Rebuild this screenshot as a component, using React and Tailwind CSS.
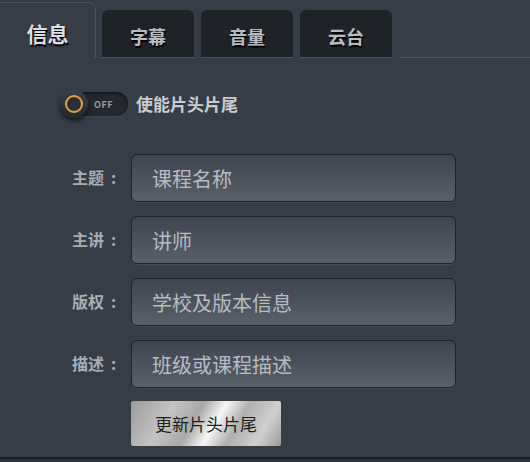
import React, { useState } from "react";

const font = { fontFamily: '"Noto Sans CJK SC", "Noto Sans", sans-serif' };

const tabs = ["信息", "字幕", "音量", "云台"];

const fields = [
  { label: "主题", placeholder: "课程名称" },
  { label: "主讲", placeholder: "讲师" },
  { label: "版权", placeholder: "学校及版本信息" },
  { label: "描述", placeholder: "班级或课程描述" },
];

const Toggle = ({ on, onClick }) => (
  <button
    onClick={onClick}
    className="relative flex h-[30px] w-[70px] items-center"
  >
    <div className="absolute left-[2px] top-[3px] flex h-[24px] w-[66px] items-center justify-end rounded-full bg-[#23282e] pr-[15px] shadow-[inset_0_1px_3px_rgba(0,0,0,0.7),0_1px_0_rgba(255,255,255,0.06)]">
      <span className="text-[9px] font-bold leading-none tracking-[0.5px] text-[#959ba2]">
        {on ? "ON" : "OFF"}
      </span>
    </div>
    <div className="relative flex h-[28px] w-[28px] items-center justify-center rounded-full bg-[linear-gradient(180deg,#3b4148,#23272c)] shadow-[0_3px_4px_rgba(0,0,0,0.6)]">
      <div className="h-[18px] w-[18px] rounded-full border-[2.5px] border-[#e4a244] bg-[#2a2f35]" />
    </div>
  </button>
);

export default function App() {
  const [active, setActive] = useState(0);
  const [on, setOn] = useState(false);

  return (
    <div style={font} className="h-[462px] w-[530px] overflow-hidden bg-[#2e343c]">
      <div className="h-[459px] border-b-2 border-[#1b1f24] bg-[#363d47]">
        <div className="flex h-[58px] items-end">
          {tabs.map((t, i) =>
            i === active ? (
              <div
                key={t}
                onClick={() => setActive(i)}
                className="mr-[6px] flex h-[56px] w-[96px] cursor-pointer items-center justify-center rounded-tr-[7px] border-r border-t border-[#4b525b] bg-[#363d47] pt-[6px] text-[21px] font-bold text-[#dcdfe2] [text-shadow:1px_2px_1px_#000]"
              >
                {t}
              </div>
            ) : (
              <div
                key={t}
                onClick={() => setActive(i)}
                className="mr-[7px] flex h-[48px] w-[92px] cursor-pointer items-center justify-center rounded-t-[6px] border-b border-[#4b525b] bg-[#1f2328] pt-[5px] text-[18px] font-bold text-[#b9bdc2] [text-shadow:1px_2px_1px_#000]"
              >
                {t}
              </div>
            )
          )}
          <div className="flex-1 border-b border-[#4b525b]" />
        </div>

        <div className="mt-[31px] flex items-center pl-[60px]">
          <Toggle on={on} onClick={() => setOn(!on)} />
          <span className="ml-[6px] text-[17px] font-bold text-[#c8ccd1]">
            使能片头片尾
          </span>
        </div>

        <div className="mt-[35px] flex flex-col gap-[14px]">
          {fields.map((f) => (
            <div key={f.label} className="flex items-center">
              <label className="flex w-[131px] items-center pb-[3px] pl-[72px] text-[16px] font-bold text-[#a9adb3]">
                {f.label}
                <span className="ml-[7px]">:</span>
              </label>
              <input
                placeholder={f.placeholder}
                style={font}
                className="h-[48px] w-[325px] rounded-[6px] border border-[#1f2328] bg-[linear-gradient(180deg,#3e4550,#5a6069)] px-[20px] text-[20px] text-[#c0c4c9] shadow-[0_1px_1px_rgba(255,255,255,0.08)] outline-none placeholder:text-[#b8bcc2]"
              />
            </div>
          ))}
        </div>

        <div className="mt-[13px] pl-[131px]">
          <button
            style={font}
            className="h-[45px] w-[150px] rounded-[2px] bg-[linear-gradient(120deg,#9a9a9a_0%,#c4c4c4_25%,#a8a8a8_42%,#f6f6f6_55%,#b0b0b0_68%,#cfcfcf_85%,#9c9c9c_100%)] text-[17px] text-[#1e1e1e]"
          >
            更新片头片尾
          </button>
        </div>
      </div>
    </div>
  );
}
